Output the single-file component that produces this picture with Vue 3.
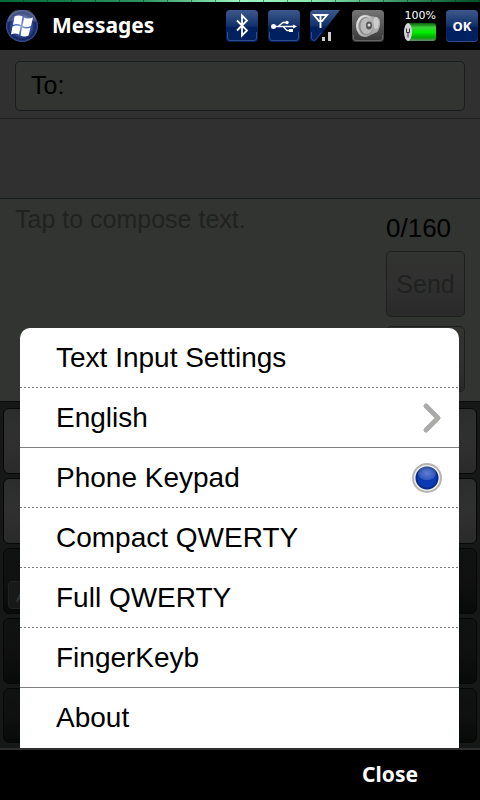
<template>
  <div class="phone">
    <header class="topbar">
      <svg class="start" viewBox="0 0 32 32">
        <defs>
          <radialGradient id="orb" cx="50%" cy="50%" r="50%">
            <stop offset="0" stop-color="#8fa6ea" />
            <stop offset="0.5" stop-color="#3f5bb4" />
            <stop offset="0.85" stop-color="#15245c" />
            <stop offset="1" stop-color="#3a55a0" />
          </radialGradient>
        </defs>
        <circle cx="16" cy="16" r="16" fill="url(#orb)" />
        <path d="M2 12a14 14 0 0 1 28 0q-14-7-28 0z" fill="#fff" opacity="0.2" />
        <g fill="#fff">
          <path d="M8.500 6.500q4-2 8 0l-1.500 8.500q-4-2-8 0z" />
          <path d="M18 7.500q4 2 9 0l-2 8.500q-4 2-8.500 0z" />
          <path d="M6.500 16.500q4-2 8 0l-1.500 8q-4-2-8 0z" />
          <path d="M16 17.500q4 2 8.500 0l-2 8q-4 2-8 0z" />
        </g>
      </svg>
      <h1 class="title">Messages</h1>

      <div class="status">
        <svg class="icon" viewBox="0 0 32 32">
          <defs>
            <linearGradient id="tile" x1="0" y1="0" x2="0" y2="1">
              <stop offset="0" stop-color="#3c5a8c" />
              <stop offset="0.5" stop-color="#12306a" />
              <stop offset="0.55" stop-color="#001f5e" />
              <stop offset="1" stop-color="#002060" />
            </linearGradient>
          </defs>
          <rect width="32" height="32" rx="4" fill="url(#tile)" />
          <path d="M1.500 22v6q0 2.500 2.500 2.500h24q2.500 0 2.500-2.500v-6" fill="none" stroke="#2f5087" />
          <path d="M11 10.500l10 10-5 5v-20l5 5-10 10" fill="none" stroke="#fff" stroke-width="1.800" />
        </svg>
        <svg class="icon" viewBox="0 0 32 32">
          <rect width="32" height="32" rx="4" fill="url(#tile)" />
          <path d="M1.500 22v6q0 2.500 2.500 2.500h24q2.500 0 2.500-2.500v-6" fill="none" stroke="#2f5087" />
          <g fill="none" stroke="#fff" stroke-width="1.300">
            <path d="M5 16.500h22M10 16.500l5-4h3M15 16.500l4 4h3" />
          </g>
          <circle cx="5.500" cy="16.500" r="2.500" fill="#fff" />
          <circle cx="19" cy="12.500" r="1.700" fill="#fff" />
          <rect x="21" y="19" width="4" height="3" fill="#fff" />
          <path d="M25 14.500l4 2-4 2z" fill="#fff" />
        </svg>
        <svg class="icon" viewBox="0 0 32 32">
          <path d="M4 0h26L6 31q-6 2-6-3V4q0-4 4-4z" fill="url(#tile)" />
          <path d="M1.500 22v6q0 2.500 3 2.500l7-8" fill="none" stroke="#2f5087" />
          <path d="M4 5h13l-5 6H9zM10.500 5v13" fill="none" stroke="#fff" stroke-width="1.900" />
          <path d="M12 27h3v4h-3zM18 22h3v9h-3z" fill="#ccc" />
        </svg>
        <svg class="icon" viewBox="0 0 32 32">
          <defs>
            <linearGradient id="grey" x1="0" y1="0" x2="0" y2="1">
              <stop offset="0" stop-color="#757575" />
              <stop offset="0.5" stop-color="#555" />
              <stop offset="1" stop-color="#373737" />
            </linearGradient>
            <linearGradient id="cone" x1="0" y1="0" x2="1" y2="1">
              <stop offset="0" stop-color="#f2f2f2" />
              <stop offset="1" stop-color="#8c8c8c" />
            </linearGradient>
          </defs>
          <rect width="32" height="32" rx="4" fill="url(#grey)" />
          <path d="M1.500 25v3q0 2.500 2.500 2.500h24q2.500 0 2.500-2.500v-3" fill="none" stroke="#666" />
          <path d="M13 5l11 2q5 1 4 8t-5 8l-9 4z" fill="#aaa" />
          <ellipse cx="24" cy="13" rx="3" ry="6" fill="#ccc" />
          <ellipse cx="13" cy="16" rx="9" ry="11" fill="url(#cone)" />
          <ellipse cx="13.500" cy="16" rx="7" ry="9" fill="#888" />
          <ellipse cx="14.500" cy="16" rx="6" ry="8" fill="#bbb" />
          <ellipse cx="17" cy="15.500" rx="3" ry="4" fill="#555" />
          <circle cx="17" cy="15" r="1.500" fill="#ddd" />
        </svg>
        <div class="battery">
          <span class="percent">100%</span>
          <svg class="cell" viewBox="0 0 32 19">
            <defs>
              <linearGradient id="charge" x1="0" y1="0" x2="0" y2="1">
                <stop offset="0" stop-color="#0a5c0a" />
                <stop offset="0.25" stop-color="#3cd03c" />
                <stop offset="0.5" stop-color="#00f000" />
                <stop offset="0.8" stop-color="#00a800" />
                <stop offset="1" stop-color="#6a8a6a" />
              </linearGradient>
            </defs>
            <path d="M4 .5h25q3 0 3 3v12q0 3-3 3H4z" fill="url(#charge)" />
            <ellipse cx="4" cy="9.500" rx="4" ry="9" fill="#d8d0e0" />
            <path d="M2.500 6v4h3V6M4 10v5" stroke="#333" fill="none" />
          </svg>
        </div>
        <button class="ok" type="button">OK</button>
      </div>
    </header>

    <main class="screen">
      <div class="recipient">
        <label class="to-field">
          <span>To:</span>
          <input v-model="recipient" type="text" />
        </label>
      </div>
      <div class="thread"></div>
      <div class="compose">
        <textarea v-model="message" class="message" placeholder="Tap to compose text." aria-label="Message"></textarea>
        <div class="side">
          <span class="counter">{{ message.length }}/160</span>
          <button class="side-button" type="button" disabled>Send</button>
          <button class="side-button" type="button" disabled aria-label="More"></button>
        </div>
      </div>
      <div class="keypad">
        <div v-for="(row, i) in keyRows" :key="i" class="key-row" :class="row">
          <button v-for="n in 3" :key="n" class="key" type="button" :aria-label="`Key ${i * 3 + n}`">
            <span v-if="i === 2 && n === 1" class="key-hint">A</span>
          </button>
        </div>
      </div>

      <div class="menu">
        <button class="item" type="button">Text Input Settings</button>
        <button class="item group-end" type="button">
          English
          <svg class="chevron" viewBox="0 0 20 32">
            <path d="M4 4l12 12L4 28" />
          </svg>
        </button>
        <label v-for="(layout, i) in layouts" :key="layout" class="item" :class="{ 'group-end': i === layouts.length - 1 }">
          {{ layout }}
          <input v-model="selected" class="radio" type="radio" name="layout" :value="layout" />
        </label>
        <button class="item last" type="button">About</button>
      </div>
    </main>

    <footer class="softkeys">
      <button class="close" type="button">Close</button>
    </footer>
  </div>
</template>

<script setup>
import { ref } from 'vue'

const recipient = ref('')
const message = ref('')

const layouts = ['Phone Keypad', 'Compact QWERTY', 'Full QWERTY', 'FingerKeyb']
const selected = ref('Phone Keypad')

const keyRows = ['light', 'light', 'dark', 'dark', 'dark short']
</script>

<style>
body {
  margin: 0;
  background: #000;
}
</style>

<style scoped>
* {
  box-sizing: border-box;
}

.phone {
  min-height: 100vh;
  display: flex;
  flex-direction: column;
  background: #000;
  font-family: 'Liberation Sans', Arial, sans-serif;
}

button,
input,
textarea {
  font-family: inherit;
  margin: 0;
}

/* top bar */
.topbar {
  position: relative;
  height: 50px;
  padding: 2px 2px 0 6px;
  display: flex;
  align-items: center;
}

.topbar::before {
  content: '';
  position: absolute;
  inset: 0 0 auto 0;
  height: 2px;
  background:
    repeating-linear-gradient(90deg, transparent 0 23px, rgba(0, 40, 20, 0.5) 23px 24px),
    linear-gradient(90deg, #006a38, #2f9562 30%, #9cf5c2 50%, #8aeab5 65%, #3d9a6a 82%, #004d26);
}

.start {
  width: 32px;
  height: 32px;
  flex: none;
}

.title {
  margin: 0 0 2px 14px;
  font-family: 'Noto Sans', 'Open Sans', sans-serif;
  font-size: 21px;
  line-height: 32px;
  font-weight: 700;
  color: #fff;
}

.status {
  margin-left: auto;
  display: flex;
  align-items: center;
  gap: 10px;
}

.icon {
  width: 32px;
  height: 32px;
}

.battery {
  width: 42px;
  height: 32px;
  display: flex;
  flex-direction: column;
  align-items: flex-end;
}

.percent {
  font-family: 'DejaVu Sans', sans-serif;
  font-size: 11px;
  line-height: 12px;
  color: #fff;
}

.cell {
  width: 32px;
  height: 20px;
}

.ok {
  width: 32px;
  height: 32px;
  padding: 0;
  border: 0;
  border-radius: 4px;
  background: linear-gradient(#3c5a8c, #12306a 50%, #001f5e 55%, #002060);
  box-shadow: inset 0 -1px 0 #2c4a85;
  color: #fff;
  font-family: 'Noto Sans', sans-serif;
  font-size: 13px;
  font-weight: 700;
}

/* dimmed message editor */
.screen {
  position: relative;
  flex: 1;
  display: flex;
  flex-direction: column;
  background: #303030;
}

.recipient {
  padding: 11px 15px 7px;
  border-bottom: 1px solid #1e2121;
}

.to-field {
  height: 50px;
  padding: 0 15px;
  display: flex;
  align-items: center;
  border: 1px solid #191c1c;
  border-radius: 5px;
  background: #323431;
  font-size: 25px;
  line-height: 46px;
  color: #000;
}

.to-field span {
  padding-bottom: 2px;
}

.to-field input {
  flex: 1;
  min-width: 0;
  border: 0;
  outline: 0;
  background: transparent;
  font-size: 25px;
}

.thread {
  height: 80px;
  border-bottom: 1px solid #191c1c;
}

.compose {
  flex: 1;
  display: flex;
  background: #323431;
}

.message {
  flex: 1;
  min-width: 0;
  padding: 6px 15px;
  border: 0;
  outline: 0;
  resize: none;
  background: transparent;
  font-size: 25px;
  line-height: 28px;
}

.message::placeholder {
  color: #20221f;
  opacity: 1;
}

.side {
  width: 94px;
  padding: 13px 15px 9px 0;
  display: flex;
  flex-direction: column;
}

.counter {
  font-size: 26px;
  line-height: 32px;
  margin-bottom: 7px;
  color: #000;
}

.side-button {
  height: 66px;
  margin-bottom: 9px;
  padding: 0;
  border: 1px solid #1e201e;
  border-radius: 5px;
  background: linear-gradient(#323431, #303030 50%, #292a29);
  font-size: 25px;
  color: #20221f;
}

.side-button:last-child {
  margin-bottom: 0;
}

.keypad {
  padding: 6px 3px 5px;
  display: flex;
  flex-direction: column;
  gap: 4px;
  border-top: 1px solid #080a09;
  background: #151817;
}

.key-row {
  height: 66px;
  display: flex;
  gap: 5px;
}

.key-row.short {
  height: 55px;
}

.key {
  flex: 1;
  padding: 31px 4px 4px;
  display: flex;
  align-items: flex-end;
  border: 1px solid #060807;
  border-radius: 6px;
}

.light .key {
  background: linear-gradient(#2b2d2c, #303030 50%, #292a29);
}

.dark .key {
  background: linear-gradient(#0e1311, #101010 50%, #060b08);
}

.key-hint {
  height: 28px;
  width: 100%;
  padding-left: 7px;
  border: 1px solid #222;
  border-radius: 4px;
  background: #171918;
  color: #3a3a3a;
  font-size: 15px;
  line-height: 30px;
  text-align: left;
}

/* popup menu */
.menu {
  position: absolute;
  left: 20px;
  right: 21px;
  bottom: 0;
  border-radius: 10px 10px 0 0;
  background: #fff;
  overflow: hidden;
}

.item {
  width: 100%;
  height: 60px;
  padding: 0 17px 0 36px;
  display: flex;
  align-items: center;
  justify-content: space-between;
  border: 0;
  background: repeating-linear-gradient(90deg, #808080 0 2px, transparent 2px 4px) bottom / 100% 1px no-repeat;
  font-size: 28px;
  line-height: 60px;
  text-align: left;
  color: #000;
}

.item.group-end {
  background: linear-gradient(#808080, #808080) bottom / 100% 1px no-repeat;
}

.item.last {
  background: none;
}

.chevron {
  width: 20px;
  height: 32px;
}

.chevron path {
  fill: none;
  stroke: #a9aba8;
  stroke-width: 5;
  stroke-linecap: round;
  stroke-linejoin: round;
}

.radio {
  appearance: none;
  width: 30px;
  height: 30px;
  margin: 0;
}

.radio:checked {
  border: 2px solid #b4b4b0;
  border-radius: 50%;
  background:
    radial-gradient(ellipse 9px 7px at 50% 32%, rgba(255, 255, 255, 0.35), rgba(255, 255, 255, 0.15) 95%, transparent),
    radial-gradient(circle, #0a3ab4 0 9px, #0a2a88 10px, #0a2a88 11px, #eee 12px);
}

/* soft keys */
.softkeys {
  height: 52px;
  display: flex;
  justify-content: flex-end;
  border-top: 2px solid #2d2e2d;
  background: #000;
}

.close {
  width: 180px;
  padding: 0 0 2px;
  border: 0;
  background: transparent;
  color: #fff;
  font-family: 'Noto Sans', 'Open Sans', sans-serif;
  font-size: 21px;
  font-weight: 700;
}
</style>
